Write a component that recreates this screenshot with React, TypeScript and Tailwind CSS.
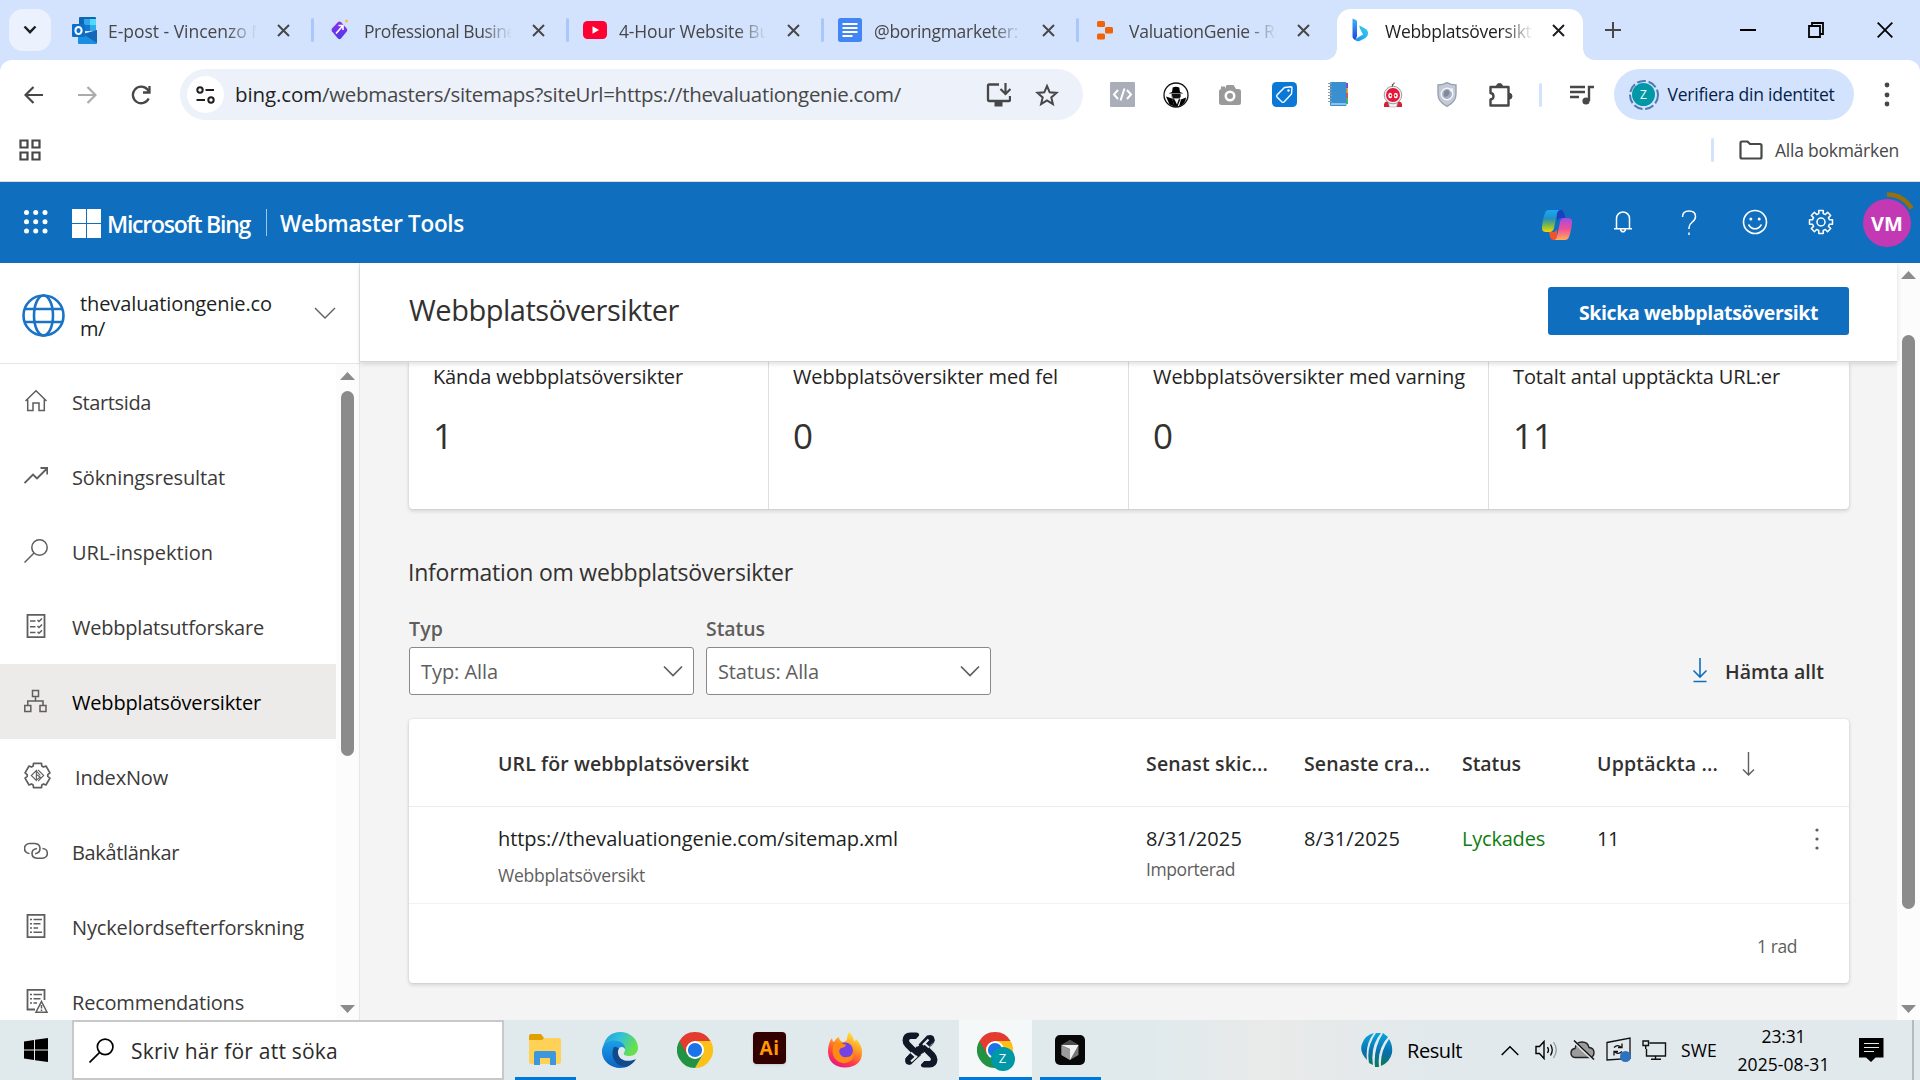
import React, { useLayoutEffect, useRef, useState } from "react";

/** Text set to a known measure: tracking is derived from its natural width. */
function Fit({ w, children, className = "" }: { w: number; children: string; className?: string }) {
  const ref = useRef<HTMLSpanElement>(null);
  const [tracking, setTracking] = useState(0);
  useLayoutEffect(() => {
    if (ref.current) {
      const natural = ref.current.getBoundingClientRect().width - tracking * children.length;
      setTracking((w - natural) / children.length);
    }
  }, [w, children]);
  return (
    <span ref={ref} className={`inline-block whitespace-nowrap ${className}`} style={{ letterSpacing: `${tracking}px` }}>
      {children}
    </span>
  );
}

type SvgProps = { w: number; h?: number; vb?: string; className?: string; children: React.ReactNode };
const Svg = ({ w, h, vb = "0 0 24 24", className = "", children }: SvgProps) => (
  <svg width={w} height={h ?? w} viewBox={vb} fill="none" className={`shrink-0 ${className}`}>
    {children}
  </svg>
);

/** Outline of a cog centred on (12, 12). */
function cog(teeth: number, outer: number, inner: number, spread: number) {
  const step = (Math.PI * 2) / teeth;
  const at = (r: number, a: number) => `${(12 + r * Math.sin(a)).toFixed(2)} ${(12 - r * Math.cos(a)).toFixed(2)}`;
  const points: string[] = [];
  for (let i = 0; i < teeth; i++) {
    const a = i * step;
    points.push(at(inner, a - spread * 1.35), at(outer, a - spread), at(outer, a + spread), at(inner, a + spread * 1.35));
  }
  return `M${points.join("L")}Z`;
}

/* ---------- Browser chrome ---------- */

const OutlookIcon = () => (
  <Svg w={25} h={27} vb="0 0 25 27">
    <rect x="7" y="0" width="17" height="14" rx="1" fill="#1066b5" />
    <rect x="12" y="2" width="6" height="6" fill="#32a9e7" />
    <rect x="18" y="2" width="6" height="6" fill="#50d9ff" />
    <rect x="12" y="8" width="6" height="6" fill="#0f78d4" />
    <rect x="18" y="8" width="6" height="6" fill="#32a9e7" />
    <path d="M6 13l9 6 10-6v13a1 1 0 0 1-1 1H7a1 1 0 0 1-1-1z" fill="#1a8ee0" />
    <path d="M25 13v13L11 17z" fill="#1565b8" />
    <rect x="0" y="7" width="13" height="13" rx="1" fill="#0a6fcb" />
    <ellipse cx="6.500" cy="13.500" rx="3.100" ry="3.600" stroke="#fff" strokeWidth="2" />
  </Svg>
);
const DiamondIcon = () => (
  <Svg w={18} h={22} vb="0 0 18 22">
    <defs>
      <linearGradient id="dia" x1="0" y1="0" x2="0" y2="1">
        <stop offset="0" stopColor="#8a35e8" />
        <stop offset="1" stopColor="#5038e8" />
      </linearGradient>
    </defs>
    <path d="M7 3q1.500-1.200 3 0l5.700 6.500q1.200 1.500 0 3l-5.700 7q-1.500 1.500-3 0L1 12.500Q0 11 1 9.500z" fill="url(#dia)" />
    <path d="M5 14.500l7-8M7.500 6.500H12V11" stroke="#fff" strokeWidth="1.600" />
    <circle cx="15.500" cy="2" r="1.500" fill="#ffb84d" />
  </Svg>
);
const YoutubeIcon = () => (
  <Svg w={24} h={18} vb="0 0 24 18">
    <rect width="24" height="18" rx="4.500" fill="#f03" />
    <path d="M9.500 5.200v7.600L16 9z" fill="#fff" />
  </Svg>
);
const DocsIcon = () => (
  <Svg w={24} h={24}>
    <rect width="24" height="24" rx="2.500" fill="#4285f4" />
    <path d="M4.500 6h15M4.500 10h15M4.500 14h15M4.500 18h10" stroke="#fff" strokeWidth="2" />
  </Svg>
);
const BlocksIcon = () => (
  <Svg w={16} h={19} vb="0 0 16 19">
    <rect x="0" y="0" width="8" height="6" rx="1.500" fill="#f26207" />
    <rect x="8" y="6" width="8" height="6.500" rx="1.500" fill="#f26207" />
    <rect x="0" y="12.500" width="8" height="6" rx="1.500" fill="#f26207" />
  </Svg>
);
const BingIcon = () => (
  <Svg w={17} h={24} vb="0 0 17 24">
    <defs>
      <linearGradient id="bing1" x1="0" y1="0" x2="0" y2="1">
        <stop offset="0" stopColor="#3fb5f5" />
        <stop offset="1" stopColor="#1546e0" />
      </linearGradient>
      <linearGradient id="bing2" x1="0" y1="1" x2="1" y2="0">
        <stop offset="0" stopColor="#1b8df0" />
        <stop offset="1" stopColor="#36d6f0" />
      </linearGradient>
    </defs>
    <path d="M.5.500L4 2q1 .5 1 1.500V18l-1.500 4Q.5 21 .5 18z" fill="url(#bing1)" />
    <path d="M7.500 7.500l5.500 3q3.500 2 3 5.500-.3 2.500-2.500 4l-6 3q-3 1-5-1.500l8.500-5-2.800-5.500q-1.200-3-.7-3.500z" fill="url(#bing2)" />
  </Svg>
);
const CloseX = ({ color = "#474747" }: { color?: string }) => (
  <Svg w={13} vb="0 0 13 13">
    <path d="M1 1l11 11M12 1L1 12" stroke={color} strokeWidth="2" />
  </Svg>
);

const tabs = [
  { icon: <OutlookIcon />, title: "E-post - Vincenzo M", w: 159 },
  { icon: <DiamondIcon />, title: "Professional Busine", w: 152 },
  { icon: <YoutubeIcon />, title: "4-Hour Website Bu", w: 151 },
  { icon: <DocsIcon />, title: "@boringmarketer:", w: 144 },
  { icon: <BlocksIcon />, title: "ValuationGenie - Re", w: 155 },
];

function TabStrip() {
  return (
    <div className="flex h-[60px] shrink-0 bg-[#d3e3fd]">
      <div className="ml-[9px] mt-[9px] flex size-[42px] items-center justify-center rounded-[14px] bg-[#ebf2fe]">
        <Svg w={14} h={10} vb="0 0 14 10">
          <path d="M1.500 1.500L7 7.200l5.500-5.700" stroke="#1f1f1f" strokeWidth="2.400" />
        </Svg>
      </div>
      <div className="ml-[17px] flex">
        {tabs.map((t, i) => (
          <div key={t.title} className="flex h-[60px] w-[255px] items-center">
            <div className={`flex w-8 justify-center ${i > 0 ? "pl-[2px]" : ""}`}>{t.icon}</div>
            <div className={`mt-[2px] overflow-hidden text-[17.500px] text-[#474747] [mask-image:linear-gradient(to_right,black_78%,transparent_98%)] ${i > 0 ? "ml-[9px] w-[151px]" : "ml-[8px] w-[152px]"}`}>
              <Fit w={t.w}>{t.title}</Fit>
            </div>
            <div className="ml-[17px]"><CloseX /></div>
            {i < 4 && <div className="ml-[21px] h-6 w-[3px] rounded bg-[#a8c7fa]" />}
          </div>
        ))}
      </div>
      <div className="-ml-[18px] flex w-[270px] items-end pt-[9px]">
        <div className="size-3 bg-white">
          <div className="size-3 rounded-br-[12px] bg-[#d3e3fd]" />
        </div>
        <div className="flex h-[51px] w-[246px] items-center rounded-t-[14px] bg-white pb-[9px]">
          <div className="ml-[15px]"><BingIcon /></div>
          <div className="ml-[16px] mt-[2px] w-[151px] overflow-hidden text-[17.500px] text-[#1f1f1f] [mask-image:linear-gradient(to_right,black_78%,transparent_98%)]">
            <Fit w={163}>Webbplatsöversikter</Fit>
          </div>
          <div className="ml-[16px]"><CloseX color="#1f1f1f" /></div>
        </div>
        <div className="size-3 bg-white">
          <div className="size-3 rounded-bl-[12px] bg-[#d3e3fd]" />
        </div>
      </div>
      <div className="flex grow items-center pl-[10px]">
        <Svg w={16} vb="0 0 16 16">
          <path d="M8 0v16M0 8h16" stroke="#474747" strokeWidth="2" />
        </Svg>
        <div className="ml-[119px] h-[2px] w-4 bg-black" />
        <Svg w={16} vb="0 0 16 16" className="ml-[52px]">
          <path d="M1 4h11v11H1zM4 4V1h11v11h-3" stroke="#000" strokeWidth="1.800" />
        </Svg>
        <Svg w={16} vb="0 0 16 16" className="ml-[53px]">
          <path d="M.7.700l14.600 14.600M15.300.700L.7 15.300" stroke="#000" strokeWidth="1.800" />
        </Svg>
      </div>
    </div>
  );
}

const extensions = [
  <Svg w={25} vb="0 0 25 25">
    <rect width="25" height="25" rx="1" fill="#a9aeb9" />
    <path d="M8 8l-4 4.500L8 17M17 8l4 4.500L17 17M14.500 6.500l-4 12" stroke="#fff" strokeWidth="2" />
  </Svg>,
  <Svg w={26} vb="0 0 26 26">
    <circle cx="13" cy="13" r="12" fill="#fff" stroke="#111" strokeWidth="1.300" />
    <path d="M9 10l.7-4.500q3-1.500 6.600 0L17 10l3.500 1.500h-15z" fill="#000" />
    <path d="M8.500 12.500h9v2l-1 3-3.500 2-3.500-2-1-3z" fill="#777" />
    <path d="M3 14.500l6 2 2.500 8-5-2zM16 24.500l2-7 5-2q0 6-7 9z" fill="#000" />
    <path d="M8.500 12h9v3l-2 1.500h-2l-.5 2-.500-2h-2z" fill="#111" />
    <path d="M9 17l2.500 7.500h3L17.500 17l-3.500 1z" fill="#000" />
    <path d="M11 16.500h5l-2 6z" fill="#f2f2f2" />
  </Svg>,
  <Svg w={22} h={20} vb="0 0 22 20">
    <rect y="4" width="22" height="16" rx="2.500" fill="#9a9a9a" />
    <path d="M6 4l1.500-4h7L17 4z" fill="#9a9a9a" />
    <circle cx="11" cy="11" r="5.500" fill="#fff" />
    <circle cx="11" cy="11" r="3" fill="#9a9a9a" />
    <rect x="2" y="1.500" width="4" height="3" fill="#9a9a9a" />
  </Svg>,
  <Svg w={25} vb="0 0 25 25">
    <rect width="25" height="25" rx="4.500" fill="#0a78d6" />
    <path d="M12.500 5.500L19 4.800q1 0 1 1L19.500 12 12 20q-1 .8-2 0l-5-5q-.8-1 0-2z" stroke="#fff" strokeWidth="1.400" />
    <circle cx="16.500" cy="8.500" r="1.200" fill="#fff" />
  </Svg>,
  <Svg w={21} h={25} vb="0 0 21 25">
    <path d="M18 1h2v5h-2z" fill="#8a3ab9" />
    <path d="M18 6h2v5h-2z" fill="#f5a52c" />
    <path d="M18 11h2v5h-2z" fill="#e8484a" />
    <path d="M18 16h2v6h-2z" fill="#3fbf4f" />
    <rect x="2" y="0" width="16.500" height="24" rx="1" fill="#3a8fd0" />
    <path d="M3 22h15" stroke="#a9d3f2" strokeWidth="1.500" />
    <path d="M0 1.500h4M0 4.500h4M0 7.500h4M0 10.500h4M0 13.500h4M0 16.500h4M0 19.500h4" stroke="#8d9aa3" strokeWidth="1" />
  </Svg>,
  <Svg w={22} h={26} vb="0 0 22 26">
    <path d="M2 25q-1-6 5-6l2 6zM20 25q1-6-5-6l-2 6z" fill="#d32036" />
    <path d="M6 19h10l-1.500 6h-7z" fill="#f2f2f2" stroke="#aaa" strokeWidth=".6" />
    <circle cx="11" cy="13" r="8.800" fill="#f0f0f0" stroke="#888" strokeWidth=".8" />
    <circle cx="11" cy="13" r="7" fill="#e3173b" />
    <path d="M10.500 4.500V2.500q2-.5 1.500-2" stroke="#555" strokeWidth="1.200" />
    <ellipse cx="8.200" cy="13.500" rx="2" ry="2.700" fill="#fff" />
    <ellipse cx="13.800" cy="13.500" rx="2" ry="2.700" fill="#fff" />
    <circle cx="8.500" cy="13.500" r=".9" fill="#c00" />
    <circle cx="13.500" cy="13.500" r=".9" fill="#c00" />
  </Svg>,
  <Svg w={20} h={25} vb="0 0 20 25">
    <path d="M10 .7q4 2.300 9 2.300v9q0 8-9 12.300Q1 20 1 12V3q5 0 9-2.300z" fill="#c3cad6" stroke="#98a1b1" strokeWidth="1.400" />
    <circle cx="10" cy="12" r="5.700" fill="#a6afbf" stroke="#f3f5f9" strokeWidth="1.500" />
    <path d="M7.500 9.500q3-3 5 .5 0 4-4.500 5-2-2-.5-5.500z" fill="#7f899b" />
    <circle cx="14.500" cy="8" r="1.700" fill="#f3f5f9" />
  </Svg>,
  <Svg w={26} vb="0 0 26 26">
    <path d="M2.500 5h18v18.500h-18v-6q3-.5 3-3.300t-3-3.200z" stroke="#474747" strokeWidth="2.400" strokeLinejoin="round" />
    <path d="M8.500 4.500a3 3 0 0 1 6 0zM21 11.200a3 3 0 0 1 0 6z" fill="#474747" stroke="#474747" />
  </Svg>,
];

function Toolbar() {
  return (
    <div className="bg-[#d3e3fd]">
      <div className="h-[121px] rounded-t-[12px] bg-white">
        <div className="flex h-[69px] items-center">
          <div className="ml-[6px] flex w-[54px] justify-center">
            <Svg w={19} h={18} vb="0 0 19 18">
              <path d="M19 9H2M9.500 1L1.500 9l8 8" stroke="#474747" strokeWidth="2.200" />
            </Svg>
          </div>
          <div className="flex w-[54px] justify-center">
            <Svg w={19} h={18} vb="0 0 19 18">
              <path d="M0 9h17M9.500 1l8 8-8 8" stroke="#ababab" strokeWidth="2.200" />
            </Svg>
          </div>
          <div className="flex w-[54px] justify-center">
            <Svg w={20} vb="0 0 20 20">
              <path d="M17.700 13.500A8.300 8.300 0 1 1 16.500 4.500L18 6.500M18.500 1v6.500H12" stroke="#474747" strokeWidth="2.300" />
            </Svg>
          </div>
          <div className="ml-[12px] flex h-[51px] w-[903px] items-center rounded-full bg-[#ecf1fa]">
            <div className="ml-[7px] flex size-[37px] items-center justify-center rounded-full bg-white">
              <Svg w={19} h={18} vb="0 0 19 18">
                <circle cx="4" cy="4" r="2.700" stroke="#1f1f1f" strokeWidth="2" />
                <circle cx="15" cy="14" r="2.700" stroke="#1f1f1f" strokeWidth="2" />
                <path d="M9.500 4H18M.5 14H9" stroke="#1f1f1f" strokeWidth="2" />
              </Svg>
            </div>
            <div className="ml-[11px] flex w-[739px] text-[20.500px] text-[#474747]">
              <Fit w={87} className="text-[#1f1f1f]">bing.com</Fit>
              <Fit w={579}>/webmasters/sitemaps?siteUrl=https://thevaluationgenie.com/</Fit>
            </div>
            <Svg w={25} h={26} vb="0 0 25 26" className="ml-[12px]">
              <path d="M13 2.500H3q-1 0-1 1v14.500q0 1 1 1h20q1 0 1-1V14" stroke="#474747" strokeWidth="2.300" />
              <path d="M8.500 19h8v5.500h-8z" fill="#474747" />
              <path d="M19.500 1v11M14.500 7l5 5 5-5" stroke="#474747" strokeWidth="2.200" />
            </Svg>
            <Svg w={24} className="ml-[24px]">
              <path d="M12 3l2.700 6.300 6.800.6-5.200 4.500 1.600 6.700L12 17.500l-5.900 3.600 1.600-6.700-5.200-4.500 6.800-.6z" stroke="#474747" strokeWidth="2" />
            </Svg>
          </div>
          <div className="ml-[12px] flex items-center">
            {extensions.map((e, i) => (
              <div key={i} className="flex w-[54.200px] justify-center">{e}</div>
            ))}
          </div>
          <div className="ml-[10px] h-6 w-[3px] rounded bg-[#d3e3fd]" />
          <Svg w={25} h={20} vb="0 0 25 20" className="ml-[28px]">
            <path d="M0 2h15M0 7h15M0 12h9M19 16V2h5" stroke="#474747" strokeWidth="2.400" />
            <circle cx="16" cy="16" r="3.600" fill="#474747" />
          </Svg>
          <div className="ml-[19px] flex h-[51px] w-[240px] items-center rounded-full bg-[#d3e3fd]">
            <div className="relative ml-[14px] flex size-[32px] items-center justify-center">
              <Svg w={32} vb="0 0 32 32" className="absolute">
                <circle cx="16" cy="16" r="14" stroke="#4c7ab0" strokeWidth="2" strokeDasharray="9 2.700" />
              </Svg>
              <div className="flex size-[23px] items-center justify-center rounded-full bg-[#0097a7] text-[12px] text-white">Z</div>
            </div>
            <Fit w={167} className="ml-[8px] text-[17.500px] text-[#041e49]">Verifiera din identitet</Fit>
          </div>
          <Svg w={6} h={26} vb="0 0 6 26" className="ml-[30px]">
            <circle cx="3" cy="3" r="2.400" fill="#474747" />
            <circle cx="3" cy="13" r="2.400" fill="#474747" />
            <circle cx="3" cy="22" r="2.400" fill="#474747" />
          </Svg>
        </div>
        <div className="flex h-[42px] items-center pl-[19px]">
          <Svg w={22} vb="0 0 22 22">
            <path d="M1.500 1.500h7v7h-7zM13.500 1.500h7v7h-7zM1.500 13.500h7v7h-7zM13.500 13.500h7v7h-7z" stroke="#474747" strokeWidth="2.200" />
          </Svg>
          <div className="ml-[1670px] h-6 w-[3px] rounded bg-[#d3e3fd]" />
          <Svg w={24} h={20} vb="0 0 24 20" className="ml-[25px]">
            <path d="M1.500 3q0-1.500 1.500-1.500h5.500L11 4h10q1.500 0 1.500 1.500V17q0 1.500-1.500 1.500H3q-1.500 0-1.500-1.500z" stroke="#474747" strokeWidth="2.200" />
          </Svg>
          <Fit w={124} className="ml-[12px] text-[17.500px] text-[#474747]">Alla bokmärken</Fit>
        </div>
        <div className="h-[10px]" />
      </div>
      <div className="h-px bg-[#d9dbde]" />
    </div>
  );
}

/* ---------- Bing header ---------- */

function BingHeader() {
  return (
    <header className="flex h-[81px] shrink-0 items-center bg-[#106ebe] text-white">
      <Svg w={24} className="-mt-[2px] ml-[24px]">
        {[2.500, 11.700, 21].map((y) => [2.500, 11.700, 21].map((x) => <circle key={`${x}-${y}`} cx={x} cy={y} r="2.500" fill="#fff" />))}
      </Svg>
      <div className="ml-[24px] mt-[2px] grid size-[29px] grid-cols-2 gap-px">
        <div className="bg-white" /><div className="bg-white" /><div className="bg-white" /><div className="bg-white" />
      </div>
      <Fit w={143} className="ml-[6px] mt-[3px] text-[23px] font-semibold">Microsoft Bing</Fit>
      <div className="ml-[16px] h-[27px] w-px bg-white/60" />
      <Fit w={184} className="ml-[13px] mt-[3px] text-[22.500px] font-semibold">Webmaster Tools</Fit>
      <div className="ml-auto flex items-center">
        <Svg w={30} vb="0 0 30 30" className="mt-[5px]">
          <defs>
            <linearGradient id="cp1" x1="0" y1="0" x2="0" y2="1">
              <stop offset="0" stopColor="#18a8f5" />
              <stop offset=".4" stopColor="#2590c0" />
              <stop offset=".7" stopColor="#7cb84a" />
              <stop offset="1" stopColor="#f5d800" />
            </linearGradient>
            <linearGradient id="cp2" x1="0" y1="0" x2="0" y2="1">
              <stop offset="0" stopColor="#a04be8" />
              <stop offset=".5" stopColor="#ef4f96" />
              <stop offset="1" stopColor="#ffae5a" />
            </linearGradient>
          </defs>
          <path d="M15 0h4q2 0 3 3l1.500 5H19q-2.500 0-3.200 2L15 12z" fill="#1b3fc0" />
          <path d="M15 30h-4q-2 0-3-3l-1-5h4q3 0 4-3z" fill="#f0542d" />
          <path d="M7 0h11q-2 0-3 3.500L12 18q-1 4-4.500 4H4q-4.500 0-4-5Q1 8 3 3q1-3 4-3z" fill="url(#cp1)" />
          <path d="M23 30H12q2 0 3-3.500L18 12q1-4 4-4h4q4.500 0 4 5-1 9-3 14-1 3-4 3z" fill="url(#cp2)" />
        </Svg>
        <Svg w={20} h={24} vb="0 0 20 24" className="-mt-px ml-[41px]">
          <path d="M3.500 18.500V8.500a6.500 6.500 0 0 1 13 0v10M1 18.700h18M7.500 19q.5 2.800 2.500 2.800t2.500-2.800" stroke="#fff" strokeWidth="1.500" />
        </Svg>
        <Svg w={16} h={25} vb="0 0 16 25" className="-mt-px ml-[48px]">
          <path d="M1.500 7q0-6 6.500-6t6.500 5.500q0 3-3.200 5.500T8 17.500v1.500M8 22.500v2.500" stroke="#fff" strokeWidth="1.500" />
        </Svg>
        <Svg w={26} vb="0 0 26 26" className="-mt-px ml-[45px]">
          <circle cx="13" cy="13" r="11.500" stroke="#fff" strokeWidth="1.600" />
          <circle cx="8.800" cy="10" r="1.500" fill="#fff" />
          <circle cx="17.200" cy="10" r="1.500" fill="#fff" />
          <path d="M6.500 15.500q2.500 4.300 6.500 4.300t6.500-4.300" stroke="#fff" strokeWidth="1.500" />
        </Svg>
        <Svg w={26} className="-mt-px ml-[40px]">
          <path d={cog(8, 10.800, 8, 0.19)} stroke="#fff" strokeWidth="1.400" strokeLinejoin="round" />
          <circle cx="12" cy="12" r="3.700" stroke="#fff" strokeWidth="1.400" />
        </Svg>
        <div className="relative ml-[29px] mr-[9px] flex size-[48px] items-center justify-center rounded-full bg-[#c239b3] text-[20px] font-bold">
          <Fit w={32} className="mt-[3px]">VM</Fit>
          <Svg w={27} h={19} vb="0 0 27 19" className="absolute -top-[7px] left-[24px]">
            <path d="M0 2.500q16 0 24.500 14" stroke="#986f0b" strokeWidth="4.500" />
          </Svg>
        </div>
      </div>
    </header>
  );
}

/* ---------- Sidebar ---------- */

const s = { stroke: "#605e5c", strokeWidth: 1.5 };
const nav: { label: string; w: number; icon: React.ReactNode; active?: boolean }[] = [
  { label: "Startsida", w: 79, icon: <path d="M1.500 12L12 1.700 22.500 12M3.700 10.500v11H9V14h6v7.500h5.300v-11" {...s} /> },
  { label: "Sökningsresultat", w: 153, icon: <path d="M.5 19L9 10.500l4 4L23 4.500M16.500 4H23.300v6.500" {...s} strokeWidth="1.900" /> },
  { label: "URL-inspektion", w: 141, icon: <><circle cx="15.500" cy="8.500" r="7.700" {...s} /><path d="M10 14L.5 23.500" {...s} /></> },
  {
    label: "Webbplatsutforskare", w: 192,
    icon: <><path d="M3.500.8h17v22.400h-17z" {...s} strokeWidth="1.800" /><path d="M6 7h5.500M6 12.800h5.500M6 18.500h5.500M13.500 6l1.500 1.500 3-3M13.500 12l1.500 1.500 3-3M13.500 17.700l1.500 1.500 3-3" {...s} /></>,
  },
  {
    label: "Webbplatsöversikter", w: 189, active: true,
    icon: <path d="M8.500 1.500h6v6h-6zM.8 16.500h6v6h-6zM16 16.500h6v6h-6zM11.500 8v4M3.800 16.500V12h15.200v4.500" {...s} />,
  },
  {
    label: "IndexNow", w: 93,
    icon: <><path d={cog(6, 11.300, 9.200, 0.32)} {...s} strokeLinejoin="round" /><path d="M11.500 7L6.500 12l5 5M12.500 7l5 5-5 5M11 8v8l3.500-2.500-3.500-2.500M11.500 8.500l3 3.500" {...s} strokeWidth="1" /></>,
  },
  {
    label: "Bakåtlänkar", w: 107,
    icon: <path d="M5.500 14.500a5 5 0 0 1 0-10h5.500q5 .4 5 5t-5 5.200M18.500 9.500a4.800 4.800 0 0 1 0 9.700h-5.500q-5-.4-5-4.700t5-5" {...s} strokeWidth="1.600" />,
  },
  {
    label: "Nyckelordsefterforskning", w: 232,
    icon: <><path d="M3.500.8h17v22.400h-17z" {...s} strokeWidth="1.800" /><path d="M6 5.500h2M9.500 5.500H18M6 9.700h2M9.500 9.700h7M6 13.900h2M9.500 13.900H14M6 18.200h2M9.500 18.200H18" {...s} /></>,
  },
  {
    label: "Recommendations", w: 172,
    icon: <><path d="M11 20.500H3.500V.8h17V11" {...s} strokeWidth="1.800" /><path d="M6 5.500h2M9.500 5.500H18M6 9.700h2M9.500 9.700h7M6 13.900h2M9.500 13.900H13" {...s} /><path d="M17.500 12.500L23 23.200H12zM17.500 16v3.500M17.500 20.500v1.500" {...s} /></>,
  },
];

function Sidebar() {
  return (
    <aside className="flex w-[360px] shrink-0 flex-col border-r border-[#e6e6e6] bg-white">
      <div className="flex h-[101px] shrink-0 items-center border-b border-[#e6e6e6]">
        <Svg w={43} vb="0 0 43 43" className="ml-[22px] mt-[5px]">
          <g stroke="#1a73c7" strokeWidth="2.600">
            <circle cx="21.500" cy="21.500" r="20" />
            <ellipse cx="21.500" cy="21.500" rx="9.500" ry="20" />
            <path d="M3 15h37M3 28h37" />
          </g>
        </Svg>
        <div className="ml-[15px] mt-[6px] flex flex-col text-[20px] leading-[25px] text-[#201f1e]">
          <Fit w={192}>thevaluationgenie.co</Fit>
          <Fit w={25} className="self-start">m/</Fit>
        </div>
        <Svg w={22} h={12} vb="0 0 22 12" className="ml-[42px]">
          <path d="M1 1l10 10L21 1" stroke="#605e5c" strokeWidth="1.400" />
        </Svg>
      </div>
      <div className="flex h-[656px] overflow-hidden">
        <nav className="w-[336px]">
          {nav.map((n) => (
            <div
              key={n.label}
              className={`flex h-[75px] items-center ${n.active ? "bg-[#edebe9] text-black" : "text-[#3b3a39]"}`}
            >
              {n.label === "IndexNow" ? (
                <Svg w={27} className="mb-[3px] ml-[24px]">{n.icon}</Svg>
              ) : (
                <Svg w={24} className="mb-px ml-[24px]">{n.icon}</Svg>
              )}
              <Fit w={n.w} className="ml-[24px] mt-[2px] text-[20px]">{n.label}</Fit>
            </div>
          ))}
        </nav>
        <div className="flex w-[23px] flex-col items-center bg-[#fcfcfc] pt-[8px]">
          <Svg w={15} h={8} vb="0 0 15 8"><path d="M0 8L7.500 0 15 8z" fill="#8b8b8b" /></Svg>
          <div className="mt-[11px] h-[365px] w-[13px] rounded-full bg-[#8b8b8b]" />
          <Svg w={15} h={8} vb="0 0 15 8" className="mt-[249px]"><path d="M0 0l7.500 8L15 0z" fill="#8b8b8b" /></Svg>
        </div>
      </div>
    </aside>
  );
}

/* ---------- Main ---------- */

const stats = [
  { label: "Kända webbplatsöversikter", w: 250, value: "1" },
  { label: "Webbplatsöversikter med fel", w: 265, value: "0" },
  { label: "Webbplatsöversikter med varning", w: 312, value: "0" },
  { label: "Totalt antal upptäckta URL:er", w: 267, value: "11" },
];

const Select = ({ label, lw, value, vw }: { label: string; lw: number; value: string; vw: number }) => (
  <div>
    <div className="h-[31px] text-[19.500px] font-semibold leading-[25px] text-[#605e5c]"><Fit w={lw}>{label}</Fit></div>
    <div className="flex h-[48px] w-[285px] items-center justify-between rounded-[3px] border border-[#8a8886] bg-white pl-[11px] pr-[10px] text-[20px] text-[#605e5c]">
      <Fit w={vw} className="mt-px">{value}</Fit>
      <Svg w={20} h={13} vb="0 0 20 13"><path d="M1 1.500l9 9 9-9" stroke="#605e5c" strokeWidth="1.700" /></Svg>
    </div>
  </div>
);

const cardShadow = "shadow-[0_2px_4px_rgba(0,0,0,0.14),0_0_2px_rgba(0,0,0,0.12)]";
const cols = "grid grid-cols-[737px_158px_158px_135px_218px_1fr]";

function Main() {
  return (
    <main className="flex min-w-0 grow bg-[#f4f4f4]">
      <div className="flex w-[1537px] flex-col">
        <div className="relative z-10 flex h-[99px] shrink-0 items-center justify-between border-b border-[#d6d6d6] bg-white pb-[2px] pl-[49px] pr-[48px] shadow-[0_2px_5px_rgba(0,0,0,0.13)]">
          <Fit w={270} className="-mt-[3px] text-[29px] text-[#323130]">Webbplatsöversikter</Fit>
          <div className="flex h-[48px] w-[301px] items-center justify-center rounded-[3px] bg-[#106ebe] text-[19.500px] font-bold text-white">
            <Fit w={239} className="mt-[3px]">Skicka webbplatsöversikt</Fit>
          </div>
        </div>
        <div className={`ml-[49px] grid h-[147px] w-[1440px] grid-cols-4 divide-x divide-[#e1dfdd] rounded-b-[4px] bg-white ${cardShadow}`}>
          {stats.map((st) => (
            <div key={st.label} className="pl-[24px] pt-[2px]">
              <Fit w={st.w} className="text-[20px] leading-[26px] text-[#252423]">{st.label}</Fit>
              <div className="mt-[22px] text-[35px] leading-[48px] text-[#323130]">
                {st.value.length > 1 ? <Fit w={40}>{st.value}</Fit> : st.value}
              </div>
            </div>
          ))}
        </div>
        <div className="ml-[48px] mt-[46px] h-[34px] text-[23px] leading-[34px] text-[#323130]">
          <Fit w={385}>Information om webbplatsöversikter</Fit>
        </div>
        <div className="ml-[49px] mt-[27px] flex w-[1440px] items-end gap-[12px]">
          <Select label="Typ" lw={34} value="Typ: Alla" vw={77} />
          <Select label="Status" lw={59} value="Status: Alla" vw={101} />
          <div className="ml-auto mr-[25px] flex h-[48px] items-center text-[#323130]">
            <Svg w={16} h={25} vb="0 0 16 25" className="mb-px">
              <path d="M8 0v19M1.500 12.500L8 19l6.500-6.500M1.500 23.500h13" stroke="#106ebe" strokeWidth="1.600" />
            </Svg>
            <Fit w={99} className="ml-[17px] mt-[2px] text-[19.500px] font-semibold">Hämta allt</Fit>
          </div>
        </div>
        <div className={`ml-[49px] mt-[24px] h-[264px] w-[1440px] rounded-[4px] bg-white pt-px ${cardShadow}`}>
          <div className={`${cols} h-[87px] items-center border-b border-[#edebe9] pt-[2px] text-[19.500px] font-semibold text-[#323130]`}>
            <div className="pl-[89px]"><Fit w={251}>URL för webbplatsöversikt</Fit></div>
            <div><Fit w={122}>Senast skic...</Fit></div>
            <div><Fit w={126}>Senaste cra...</Fit></div>
            <div><Fit w={59}>Status</Fit></div>
            <div className="flex items-center">
              <Fit w={121}>Upptäckta ...</Fit>
              <Svg w={13} h={25} vb="0 0 13 25" className="ml-[24px]">
                <path d="M6.500 0v23M1 17.500L6.500 23l5.500-5.500" stroke="#605e5c" strokeWidth="1.400" />
              </Svg>
            </div>
          </div>
          <div className={`${cols} h-[97px] border-b border-[#f3f2f1] pt-[19px] text-[20px] leading-[26px] text-[#201f1e]`}>
            <div className="pl-[89px]">
              <Fit w={400}>https://thevaluationgenie.com/sitemap.xml</Fit>
              <div className="mt-[10px] text-[17.500px] text-[#605e5c]"><Fit w={147}>Webbplatsöversikt</Fit></div>
            </div>
            <div>
              <Fit w={96}>8/31/2025</Fit>
              <div className="mt-[4px] text-[17.500px] text-[#605e5c]"><Fit w={89}>Importerad</Fit></div>
            </div>
            <div><Fit w={96}>8/31/2025</Fit></div>
            <div className="text-[#107c10]"><Fit w={83}>Lyckades</Fit></div>
            <div><Fit w={22}>11</Fit></div>
            <Svg w={4} h={24} vb="0 0 4 24" className="mt-px">
              <circle cx="2" cy="3" r="1.600" fill="#605e5c" />
              <circle cx="2" cy="12" r="1.600" fill="#605e5c" />
              <circle cx="2" cy="21" r="1.600" fill="#605e5c" />
            </Svg>
          </div>
          <div className="flex h-[84px] items-center justify-end pr-[52px] pt-px text-[17.500px] text-[#605e5c]">
            <Fit w={40}>1 rad</Fit>
          </div>
        </div>
      </div>
      <div className="flex w-[23px] flex-col items-center bg-[#fcfcfc] pt-[8px]">
        <Svg w={15} h={8} vb="0 0 15 8"><path d="M0 8L7.500 0 15 8z" fill="#8b8b8b" /></Svg>
        <div className="mt-[56px] h-[574px] w-[13px] rounded-full bg-[#8b8b8b]" />
        <Svg w={15} h={8} vb="0 0 15 8" className="mt-[96px]"><path d="M0 0l7.500 8L15 0z" fill="#8b8b8b" /></Svg>
      </div>
    </main>
  );
}

/* ---------- Taskbar ---------- */

const ChromeArt = () => (
  <>
    <path d="M18 18V36A18 18 0 0 1 2.410 9z" fill="#229342" />
    <path d="M18 9h15.590A18 18 0 0 1 18 36l7.800-13.500z" fill="#fbc116" />
    <path d="M2.410 9l7.800 13.500L18 36l7.800-13.500L18 18z" fill="#229342" />
    <path d="M18 9h15.590A18 18 0 0 0 2.410 9l7.800 13.500z" fill="#e33b2e" />
    <circle cx="18" cy="18" r="9" fill="#fff" />
    <circle cx="18" cy="18" r="7.100" fill="#1a73e8" />
  </>
);

const EdgeArt = () => (
  <Svg w={36} vb="0 0 36 36">
    <defs>
      <linearGradient id="e1" x1="0" y1="0" x2="1" y2=".4">
        <stop offset="0" stopColor="#1f9ae0" />
        <stop offset=".5" stopColor="#35c1d8" />
        <stop offset="1" stopColor="#66e04c" />
      </linearGradient>
      <linearGradient id="e2" x1="0" y1="0" x2="0" y2="1">
        <stop offset="0" stopColor="#1ca0e8" />
        <stop offset="1" stopColor="#0c62c4" />
      </linearGradient>
    </defs>
    <path d="M1 15C3 5 10 0 18 0c11 0 18 8 18 15.500 0 5.500-4 8.500-8.500 8.500-4 0-6.500-1.300-5.500-3 3-5-1-9.500-7-9.500C8 11.500 2 12 1 15z" fill="url(#e1)" />
    <path d="M0 18C1 11 7 8.500 12.500 8.500c7 0 11 4.500 10.500 8.500-2-3-6-2.500-7 1-2 8 5 15 13 14C26 35 22 36 18 36 8 36-1 28 0 18z" fill="url(#e2)" />
    <path d="M12 15C7 25 15 36 25 34.500c4-1.500 7-4 9-7.500-6 3-17 3-18-6-.2-2 .2-3.500 1-4.500-2-1-4-2-5-1.500z" fill="#114a8b" />
  </Svg>
);
const FirefoxArt = () => (
  <Svg w={34} h={36} vb="0 0 34 36">
    <defs>
      <linearGradient id="ff" x1=".8" y1="0" x2=".3" y2="1">
        <stop offset="0" stopColor="#fff04a" />
        <stop offset=".4" stopColor="#ff9a1f" />
        <stop offset=".75" stopColor="#ff3a4a" />
        <stop offset="1" stopColor="#e31587" />
      </linearGradient>
    </defs>
    <path d="M21 0q4 3 5 9 2 0 2-2 6 6 6 13 0 15-17 15.500Q1 35 0 20 0 11 4 6q0 3 2 4 2-4 5-5 0 4 4 5 4-1 4-3 0-4 2-7z" fill="url(#ff)" />
    <circle cx="17" cy="18.500" r="8" fill="#7542e5" />
    <path d="M5 13q4-3 8-2l5 2q-1 2.500-5 3-2.500 2-1.500 5 2 5 7.500 4 4 0 5.500-4 3 3-1 7-4 4-9 3-9-2-10-11z" fill="#ff8a16" />
  </Svg>
);
const KnotArt = () => (
  <Svg w={36} vb="0 0 36 36">
    <g stroke="#101727" strokeWidth="6.500">
      <path d="M14 3.800H8.500Q4 4 3.800 8.500q0 2 1.700 4l6 6" strokeLinecap="round" />
      <path d="M22 32.200h5.500q4.500-.2 4.700-4.700 0-2-1.700-4l-6-6" strokeLinecap="round" />
      <path d="M32.200 7.500q0 3-2 5L9 31.500q-4.500 1.500-5.200-3 0-2.500 2-4.500L27 4" strokeWidth="1" />
    </g>
    <path d="M25 3.500Q33 1 32.500 9L9 32.500Q2 34 3.500 26.500z" fill="#101727" />
    <path d="M29.500 6.500L6.500 29.500" stroke="#e3ebee" strokeWidth="0" />
    <path d="M26.500 7.500L21 13M15 24l-6 5.500M12 9.500l4.500 4.500M19.500 22l5 5" stroke="#e3ebee" strokeWidth="2.200" />
    <path d="M21.500 0L12.500 10M23.500 26.500L14.500 36M9 20.500l5 4.500M22 11l5 4.500" stroke="#e3ebee" strokeWidth="1.800" />
  </Svg>
);

const TaskSlot = ({ children, state = "idle" }: { children: React.ReactNode; state?: "idle" | "open" | "active" }) => (
  <div className="flex h-full w-[75px] flex-col items-center justify-between">
    <div className={`flex h-[57px] items-center justify-center pr-[2px] pt-[2px] ${state === "active" ? "w-[73px] bg-[#f5f8f9]" : "w-full"}`}>{children}</div>
    {state !== "idle" && <div className={`h-[3px] bg-[#0078d7] ${state === "active" ? "w-[73px]" : "w-[61px]"}`} />}
  </div>
);

function Taskbar() {
  return (
    <footer className="flex h-[60px] shrink-0 items-center bg-linear-to-r from-[#e0eaed] from-60% via-[#e9eaea] via-66% to-[#e1e9ec] to-75%">
      <Svg w={24} className="ml-[24px]">
        <path d="M0 3.400L10 2v9.500H0zM11 1.800L24 0v11.500H11zM0 12.500h10V22L0 20.600zM11 12.500h13V24l-13-1.800z" fill="#000" />
      </Svg>
      <div className="ml-[24px] flex h-[60px] w-[432px] items-center border-2 border-[#c8c8c8] bg-white">
        <Svg w={25} className="ml-[15px]">
          <circle cx="15.500" cy="8.500" r="7.500" stroke="#000" strokeWidth="1.600" />
          <path d="M10 14L.5 23.500" stroke="#000" strokeWidth="1.600" />
        </Svg>
        <Fit w={207} className="ml-[17px] mt-[3px] text-[21px] text-[#2b2b2b]">Skriv här för att söka</Fit>
      </div>
      <div className="ml-[4px] flex h-full">
        <TaskSlot state="open">
          <Svg w={32} h={32} vb="0 0 32 32">
            <path d="M0 2q0-2 2-2h10l3 4v4H0z" fill="#e0a000" />
            <path d="M0 6h13l2-2h15q2 0 2 2v22q0 2-2 2H2q-2 0-2-2z" fill="#ffd257" />
            <path d="M5 31V19q0-2 2-2h18q2 0 2 2v12h-6v-7H11v7z" fill="#3c97dd" />
          </Svg>
        </TaskSlot>
        <TaskSlot><EdgeArt /></TaskSlot>
        <TaskSlot><Svg w={36} vb="0 0 36 36"><ChromeArt /></Svg></TaskSlot>
        <TaskSlot>
          <div className="mb-[3px] flex h-[32px] w-[33px] items-center justify-center rounded-[4px] bg-[#330000] text-[19px] font-bold text-[#ff9a00] shadow-sm">
            <Fit w={20}>Ai</Fit>
          </div>
        </TaskSlot>
        <TaskSlot><FirefoxArt /></TaskSlot>
        <TaskSlot><KnotArt /></TaskSlot>
        <TaskSlot state="active">
          <div className="relative size-[36px]">
            <Svg w={36} vb="0 0 36 36"><ChromeArt /></Svg>
            <div className="absolute left-[14px] top-[15px] flex size-[24px] items-center justify-center rounded-full bg-[#0097a7] text-[13px] text-white">Z</div>
          </div>
        </TaskSlot>
        <TaskSlot state="open">
          <Svg w={30} vb="0 0 30 30">
            <rect width="30" height="30" rx="5" fill="#080808" />
            <path d="M15 5l8.500 5v10L15 25l-8.500-5V10z" fill="#777" />
            <path d="M6.500 10h17L15 25V14z" fill="#f2f2f2" />
            <path d="M6.500 10l8.500 5v10l-8.500-5z" fill="#9c9c9c" />
            <path d="M15 5l8.500 5h-17z" fill="#4d4d4d" />
          </Svg>
        </TaskSlot>
      </div>
      <Svg w={32} h={36} vb="0 0 32 36" className="ml-[253px]">
        <defs>
          <linearGradient id="icc" x1="0" y1="0" x2="0" y2="1">
            <stop offset="0" stopColor="#08a5e0" />
            <stop offset=".55" stopColor="#0870ad" />
            <stop offset="1" stopColor="#0a7a55" />
          </linearGradient>
        </defs>
        <path d="M6 28Q-2 20 1 12 4 3 13 1 4 12 6 28zM8 31Q5 15 15 1h5Q9 14 12 33zM14 35Q12 17 22 1l5 4Q16 17 18 35zM20 34Q19 20 28 7q4 6 3 14-2 9-11 13z" fill="url(#icc)" />
      </Svg>
      <Fit w={55} className="ml-[14px] mt-[2px] text-[20px] text-black">Result</Fit>
      <Svg w={18} h={11} vb="0 0 18 11" className="ml-[39px]"><path d="M.7 10L9 1.700l8.300 8.300" stroke="#000" strokeWidth="1.500" /></Svg>
      <Svg w={23} h={20} vb="0 0 23 20" className="ml-[16px]">
        <path d="M1 6.500h3.500L9 1.500v17l-4.500-5H1z" stroke="#000" strokeWidth="1.400" />
        <path d="M12.500 7q2 3 0 6M15.500 4.500q3.500 5.500 0 11" stroke="#000" strokeWidth="1.300" />
        <path d="M18.500 2q5.500 8 0 16" stroke="#999" strokeWidth="1.300" />
      </Svg>
      <Svg w={25} h={20} vb="0 0 25 20" className="ml-[12px]">
        <path d="M5 17.500Q1 17 1 13t4-4.500Q6 2 12 2q6 0 7 5.500 5 .5 5 5t-4 5z" fill="#9b9b9b" stroke="#222" strokeWidth="1.400" />
        <path d="M3 .5l20 19" stroke="#e3ebee" strokeWidth="3" />
        <path d="M4 .5l20 19" stroke="#111" strokeWidth="1.500" />
      </Svg>
      <Svg w={26} h={26} vb="0 0 26 26" className="ml-[11px]">
        <path d="M1 5.500L24 1v20.500L1 23z" stroke="#111" strokeWidth="1.300" />
        <path d="M8 10.500q3.500-3.500 7-.5M16 6.500v4h-4M16 14.500q-3.500 3.500-7 .5M8 18.500v-4h4" stroke="#111" strokeWidth="1.300" />
        <circle cx="19.500" cy="19.500" r="5.500" fill="#2d72bf" />
      </Svg>
      <Svg w={25} h={20} vb="0 0 25 20" className="ml-[10px]">
        <path d="M7.500 3h16v13h-19V9M13.500 16v3M9 19.200h10M1 1h5.500v4.500H1zM3.700 5.500V9" stroke="#111" strokeWidth="1.400" />
      </Svg>
      <Fit w={36} className="ml-[14px] text-[17.500px] text-black">SWE</Fit>
      <div className="ml-[15px] flex w-[103px] flex-col items-center text-[17.500px] leading-[28px] text-black">
        <Fit w={44}>23:31</Fit>
        <Fit w={92}>2025-08-31</Fit>
      </div>
      <Svg w={25} h={25} vb="0 0 25 25" className="ml-[24px]">
        <path d="M0 0h24.500v19.500h-8L12 24l-5-4.500H0z" fill="#000" />
        <path d="M5 5.500h15M5 9.500h15M5 13.500h10" stroke="#e3ebee" strokeWidth="1.200" />
      </Svg>
      <div className="ml-auto mr-[6px] h-full w-[2px] bg-[#b5babd]" />
    </footer>
  );
}

export default function App() {
  return (
    <div className="flex h-[1080px] w-[1920px] flex-col overflow-hidden bg-white font-['Open_Sans','Noto_Sans',sans-serif]">
      <TabStrip />
      <Toolbar />
      <BingHeader />
      <div className="flex h-[757px] shrink-0 overflow-hidden">
        <Sidebar />
        <Main />
      </div>
      <Taskbar />
    </div>
  );
}
